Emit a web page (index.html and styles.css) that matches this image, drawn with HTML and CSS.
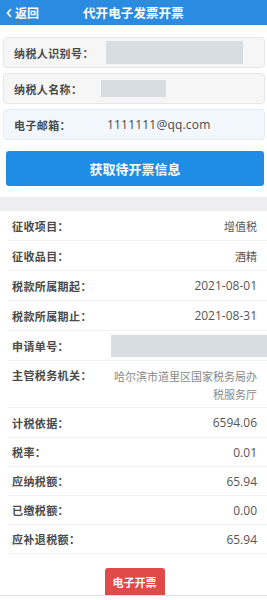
FILE: index.html
```html
<!DOCTYPE html>
<html lang="zh">
<head>
<meta charset="utf-8">
<link rel="stylesheet" href="styles.css">
</head>
<body>
<header class="top">
  <span class="back"><svg class="chev" viewBox="0 0 6 10" width="6" height="10"><path d="M5 1 L1.5 5 L5 9" fill="none" stroke="#fff" stroke-width="1.6"/></svg>返回</span>
  <span class="title">代开电子发票开票</span>
</header>
<section class="form">
  <div class="field"><span class="flabel">纳税人识别号：</span><span class="mask m1"></span></div>
  <div class="field"><span class="flabel">纳税人名称：</span><span class="mask m2"></span></div>
  <div class="field blue"><span class="flabel">电子邮箱：</span><span class="fval">1111111@qq.com</span></div>
  <button class="fetch">获取待开票信息</button>
</section>
<div class="band"></div>
<ul class="list">
  <li><span class="k">征收项目：</span><span class="v">增值税</span></li>
  <li><span class="k">征收品目：</span><span class="v">酒精</span></li>
  <li><span class="k">税款所属期起：</span><span class="v num">2021-08-01</span></li>
  <li><span class="k">税款所属期止：</span><span class="v num">2021-08-31</span></li>
  <li><span class="k">申请单号：</span><span class="mask m3"></span></li>
  <li class="tall"><span class="k">主管税务机关：</span><span class="v wrap">哈尔滨市道里区国家税务局办税服务厅</span></li>
  <li><span class="k">计税依据：</span><span class="v num">6594.06</span></li>
  <li class="short"><span class="k">税率：</span><span class="v num">0.01</span></li>
  <li class="short"><span class="k">应纳税额：</span><span class="v num">65.94</span></li>
  <li class="short"><span class="k">已缴税额：</span><span class="v num">0.00</span></li>
  <li class="short"><span class="k">应补退税额：</span><span class="v num">65.94</span></li>
</ul>
<div class="foot"><button class="issue">电子开票</button></div>
</body>
</html>
```
FILE: styles.css
```css
* { box-sizing: border-box; }
html, body { margin: 0; padding: 0; }
body {
  width: 267px;
  height: 600px;
  overflow: hidden;
  background: #fff;
  font-family: "Noto Sans CJK SC", "Noto Sans", sans-serif;
  color: #444;
}
.top {
  height: 25px;
  background: #2b8be0;
  color: #fff;
  display: flex;
  align-items: center;
  position: relative;
}
.back {
  display: flex;
  align-items: center;
  gap: 3px;
  padding-left: 6px;
  font-size: 12px;
  font-weight: 700;
}
.title {
  position: absolute;
  left: 83px;
  top: 0;
  line-height: 25px;
  font-size: 12.5px;
  font-weight: 700;
  letter-spacing: 0.1px;
}
.form {
  padding: 12px 2px 0 3px;
  display: flex;
  flex-direction: column;
}
.field {
  height: 31px;
  margin-bottom: 5px;
  border: 1px solid #e6e6e6;
  border-radius: 4px;
  background: #f6f6f6;
  display: flex;
  align-items: center;
  padding-left: 10px;
  font-size: 11px;
}
.field.blue { background: #f1f7fd; border-color: #e3ecf4; }
.flabel { font-weight: 700; color: #4a4a4a; letter-spacing: 0.4px; }
.fval { margin-left: 36px; color: #4a4a4a; font-size: 12px; letter-spacing: 0.2px; font-family: "Open Sans", "Noto Sans", sans-serif; }
.mask { display: block; background: #d8dde1; }
.m1 { width: 137px; height: 23px; margin-left: 12px; }
.m2 { width: 65px; height: 17px; margin-left: 19px; }
.m3 { width: 156px; height: 22px; margin-left: auto; margin-right: -10px; }
.fetch {
  margin: 6px 1px 0 3px;
  height: 35px;
  border: none;
  border-radius: 3px;
  background: #1f8ce6;
  color: #fff;
  font-family: inherit;
  font-size: 13px;
  font-weight: 700;
  padding: 0;
}
.band {
  height: 14px;
  margin-top: 11px;
  background: #efeff3;
}
.list {
  list-style: none;
  margin: 0;
  padding: 0;
}
.list li {
  display: flex;
  align-items: center;
  justify-content: space-between;
  height: 30px;
  margin-left: 8px;
  padding: 0 10px 0 4px;
  border-bottom: 1px solid #f2f2f2;
  font-size: 11px;
}
.list li.short { height: 29px; }
.list li.tall { height: 47px; align-items: flex-start; padding-top: 6px; }
.k { font-weight: 700; color: #4a4a4a; white-space: nowrap; letter-spacing: 0.4px; }
.v { color: #555; text-align: right; }
.v.num { font-size: 12px; font-family: "Open Sans", "Noto Sans", sans-serif; }
.v.wrap { width: 144px; line-height: 18px; color: #888; }
.foot {
  display: flex;
  justify-content: center;
  padding-top: 14px;
  border-bottom: 1px solid #ddd;
}
.issue {
  width: 60px;
  height: 27px;
  border: none;
  border-radius: 3px 3px 0 0;
  background: #e04a48;
  color: #fff;
  font-family: inherit;
  font-size: 11px;
  font-weight: 700;
  padding: 0;
  margin-left: 2px;
}
```
